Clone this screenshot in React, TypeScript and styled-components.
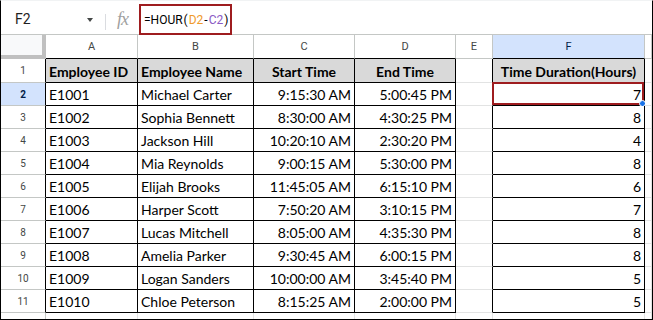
import styled, { createGlobalStyle } from "styled-components";

const GlobalStyle = createGlobalStyle`
  html, body {
    margin: 0;
    padding: 0;
    background: #ffffff;
  }
  * {
    box-sizing: border-box;
  }
`;

const GRID = "#e2e3e3";
const HEAD_LINE = "#c4c7c5";
const INK = "#000000";
const SELECT = "#9e1c1f";

const Frame = styled.div`
  width: 653px;
  height: 320px;
  border: 1px solid #000;
  border-top-color: #f1f3f4;
  overflow: hidden;
  background: #fff;
  display: flex;
  flex-direction: column;
`;

const FormulaBar = styled.div`
  height: 34px;
  flex: none;
  display: flex;
  align-items: flex-start;
  padding-top: 3px;
  border-bottom: 1px solid ${HEAD_LINE};
`;

const NameBox = styled.div`
  width: 104px;
  height: 30px;
  display: flex;
  align-items: center;
  justify-content: space-between;
  padding: 0 12px 0 14px;
  font-family: Roboto, "Liberation Sans", sans-serif;
  font-size: 14px;
  color: #1f1f1f;
`;

const Caret = styled.span`
  width: 0;
  height: 0;
  border-left: 3.5px solid transparent;
  border-right: 3.5px solid transparent;
  border-top: 4px solid #444746;
  margin-top: 2px;
`;

const Divider = styled.span`
  width: 1px;
  height: 16px;
  margin-top: 10px;
  background: #dadce0;
`;

const Fx = styled.span`
  width: 33px;
  height: 30px;
  display: flex;
  align-items: center;
  justify-content: center;
  font-family: "Liberation Serif", serif;
  font-style: italic;
  font-size: 18px;
  letter-spacing: -1px;
  color: #a0a0a0;
`;

const FormulaBox = styled.div`
  height: 31px;
  width: 93px;
  border: 2px solid ${SELECT};
  display: flex;
  align-items: center;
  padding-left: 3px;
  font-family: Roboto, "Liberation Sans", sans-serif;
  font-size: 12px;
  color: #000;
  white-space: nowrap;
`;

const Token = styled.span<{ $color?: string; $gap?: boolean }>`
  color: ${(p) => p.$color || "#000"};
  margin: ${(p) => (p.$gap ? "0 1px" : "0")};
`;

const Sheet = styled.div`
  display: grid;
  grid-template-columns: 45px 92px 116px 101px 101px 37px 152px 1fr;
  grid-template-rows: 24px 24px repeat(11, 23px);
`;

const Corner = styled.div`
  background: #f8f9fa;
  border-right: 4px solid #c0c0c0;
  border-bottom: 4px solid #c0c0c0;
`;

const ColHead = styled.div<{ $active?: boolean; $edge?: boolean }>`
  display: flex;
  align-items: center;
  justify-content: center;
  font-family: Roboto, "Liberation Sans", sans-serif;
  font-size: 11px;
  color: ${(p) => (p.$active ? "#041e49" : "#444746")};
  background: ${(p) => (p.$active ? "#d3e3fd" : "#fff")};
  border-right: 1px solid ${HEAD_LINE};
  border-bottom: 1px solid ${(p) => (p.$edge ? INK : HEAD_LINE)};
`;

const RowHead = styled.div<{ $active?: boolean; $edge?: boolean }>`
  display: flex;
  align-items: center;
  justify-content: center;
  font-family: Roboto, "Liberation Sans", sans-serif;
  font-size: 10px;
  font-weight: ${(p) => (p.$active ? 700 : 400)};
  color: ${(p) => (p.$active ? "#041e49" : "#444746")};
  background: ${(p) => (p.$active ? "#d3e3fd" : "#fff")};
  border-right: 1px solid ${(p) => (p.$edge ? INK : HEAD_LINE)};
  border-bottom: 1px solid ${HEAD_LINE};
`;

const Cell = styled.div<{
  $align?: "left" | "right" | "center";
  $head?: boolean;
  $boxed?: boolean;
  $edge?: boolean;
}>`
  position: relative;
  display: flex;
  align-items: center;
  justify-content: ${(p) =>
    p.$align === "right" ? "flex-end" : p.$align === "center" ? "center" : "flex-start"};
  padding: 1px 3px 0 3px;
  font-family: Lato, "Open Sans", sans-serif;
  font-size: 14px;
  font-weight: ${(p) => (p.$head ? 700 : 400)};
  color: #000;
  white-space: nowrap;
  overflow: visible;
  background: ${(p) => (p.$head ? "#d9d9d9" : "#fff")};
  border-right: 1px solid ${(p) => (p.$boxed || p.$edge ? INK : GRID)};
  border-bottom: 1px solid ${(p) => (p.$boxed ? INK : GRID)};
`;

const Selection = styled.div`
  position: absolute;
  top: -1px;
  left: -1px;
  right: 0;
  bottom: 0;
  border: 2px solid ${SELECT};
  pointer-events: none;
`;

const Handle = styled.span`
  position: absolute;
  right: -4px;
  bottom: -4px;
  width: 7px;
  height: 7px;
  border-radius: 50%;
  background: #1a73e8;
  border: 1px solid #fff;
`;

type Row = [string, string, string, string, number];

const rows: Row[] = [
  ["E1001", "Michael Carter", "9:15:30 AM", "5:00:45 PM", 7],
  ["E1002", "Sophia Bennett", "8:30:00 AM", "4:30:25 PM", 8],
  ["E1003", "Jackson Hill", "10:20:10 AM", "2:30:20 PM", 4],
  ["E1004", "Mia Reynolds", "9:00:15 AM", "5:30:00 PM", 8],
  ["E1005", "Elijah Brooks", "11:45:05 AM", "6:15:10 PM", 6],
  ["E1006", "Harper Scott", "7:50:20 AM", "3:10:15 PM", 7],
  ["E1007", "Lucas Mitchell", "8:05:00 AM", "4:35:30 PM", 8],
  ["E1008", "Amelia Parker", "9:30:45 AM", "6:00:15 PM", 8],
  ["E1009", "Logan Sanders", "10:00:00 AM", "3:45:40 PM", 5],
  ["E1010", "Chloe Peterson", "8:15:25 AM", "2:00:00 PM", 5],
];

const letters = ["A", "B", "C", "D", "E", "F", ""];

function App() {
  return (
    <>
      <GlobalStyle />
      <Frame>
        <FormulaBar>
          <NameBox>
            F2
            <Caret />
          </NameBox>
          <Divider />
          <Fx>fx</Fx>
          <FormulaBox>
            <Token>=HOUR</Token>
            <Token $gap>(</Token>
            <Token $color="#f09a2b">D2</Token>
            <Token $gap>-</Token>
            <Token $color="#8a59c4">C2</Token>
            <Token $gap>)</Token>
          </FormulaBox>
        </FormulaBar>

        <Sheet>
          <Corner />
          {letters.map((l, i) => (
            <ColHead key={i} $active={l === "F"} $edge={l !== "E" && l !== ""}>
              {l}
            </ColHead>
          ))}

          <RowHead $edge>1</RowHead>
          <Cell $head $boxed>Employee ID</Cell>
          <Cell $head $boxed>Employee Name</Cell>
          <Cell $head $boxed $align="center">Start Time</Cell>
          <Cell $head $boxed $align="center">End Time</Cell>
          <Cell $edge />
          <Cell $head $boxed $align="center">Time Duration(Hours)</Cell>
          <Cell />

          {rows.map((r, i) => (
            <>
              <RowHead key={`h${i}`} $edge $active={i === 0}>
                {i + 2}
              </RowHead>
              <Cell key={`a${i}`} $boxed>{r[0]}</Cell>
              <Cell key={`b${i}`} $boxed>{r[1]}</Cell>
              <Cell key={`c${i}`} $boxed $align="right">{r[2]}</Cell>
              <Cell key={`d${i}`} $boxed $align="right">{r[3]}</Cell>
              <Cell key={`e${i}`} $edge />
              <Cell key={`f${i}`} $boxed $align="right">
                {r[4]}
                {i === 0 && (
                  <Selection>
                    <Handle />
                  </Selection>
                )}
              </Cell>
              <Cell key={`g${i}`} />
            </>
          ))}

          <RowHead>12</RowHead>
          {letters.map((_, i) => (
            <Cell key={`r12${i}`} />
          ))}
        </Sheet>
      </Frame>
    </>
  );
}

export default App;
